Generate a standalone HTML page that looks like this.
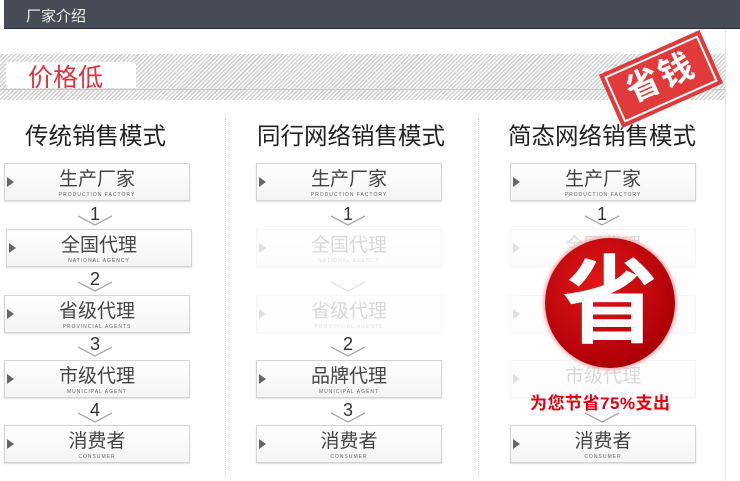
<!DOCTYPE html>
<html><head><meta charset="utf-8"><style>
*{margin:0;padding:0;box-sizing:border-box}
body{width:740px;height:481px;background:#fff;position:relative;overflow:hidden;font-family:"Liberation Sans","Noto Sans CJK SC",sans-serif}
.hdr{position:absolute;left:4px;top:0;width:736px;height:29px;background:#464b55;border-bottom:1px solid #2e323a}
.hdr span{position:absolute;left:22px;top:5px;color:#f2f2f2;font-size:15px}
.hatch{position:absolute;left:0;top:54px;width:725px;height:46px;background:repeating-linear-gradient(135deg,#fff 0 1.5px,#cfcfcf 1.5px 3px)}
.line{position:absolute;left:0;top:89px;width:725px;height:1px;background:#c8c8c8}
.tag{position:absolute;left:6px;top:62px;width:130px;height:26px;background:#fff}
.tag span{position:absolute;left:22px;top:-4px;color:#e5303c;font-size:25px}
.vr{position:absolute;left:725px;top:30px;width:1px;height:451px;background:#e6e6e6}
.dv{position:absolute;top:118px;height:358px;border-left:1px dotted #c8c8c8}
.ttl{position:absolute;top:117px;font-size:23.5px;color:#222}
.box{position:absolute;width:186px;height:38px;border:1px solid #d4d4d4;background:linear-gradient(#fff,#f4f4f4);box-shadow:0 1px 1px #ddd}
.box:before{content:"";position:absolute;left:2px;top:13px;border-left:7px solid #666;border-top:5px solid transparent;border-bottom:5px solid transparent}
.box b{position:absolute;left:0;right:0;top:6px;text-align:center;font-weight:normal;font-size:19px;color:#444;line-height:20px}
.box i{position:absolute;left:0;right:0;top:28px;text-align:center;font-style:normal;font-size:5px;letter-spacing:1px;color:#666}
.f{opacity:.2}
.n{position:absolute;width:40px;text-align:center;font-size:18px;color:#333;line-height:18px}
</style></head><body>
<div class="hdr"><span>厂家介绍</span></div>
<div class="hatch"></div><div class="line"></div>
<div class="tag"><span>价格低</span></div>
<div class="vr"></div>
<div class="dv" style="left:225px"></div><div class="dv" style="left:478px"></div>
<div class="ttl" style="left:25px">传统销售模式</div>
<div class="ttl" style="left:257px">同行网络销售模式</div>
<div class="ttl" style="left:508px">简态网络销售模式</div>

<div class="box" style="left:4px;top:163px"><b>生产厂家</b><i>PRODUCTION FACTORY</i></div>
<div class="box" style="left:6px;top:229px"><b>全国代理</b><i>NATIONAL AGENCY</i></div>
<div class="box" style="left:4px;top:295px"><b>省级代理</b><i>PROVINCIAL AGENTS</i></div>
<div class="box" style="left:4px;top:360px"><b>市级代理</b><i>MUNICIPAL AGENT</i></div>
<div class="box" style="left:4px;top:425px"><b>消费者</b><i>CONSUMER</i></div>
<div class="box" style="left:256px;top:163px"><b>生产厂家</b><i>PRODUCTION FACTORY</i></div>
<div class="box f" style="left:256px;top:229px"><b>全国代理</b><i>NATIONAL AGENCY</i></div>
<div class="box f" style="left:256px;top:295px"><b>省级代理</b><i>PROVINCIAL AGENTS</i></div>
<div class="box" style="left:256px;top:360px"><b>品牌代理</b><i>MUNICIPAL AGENT</i></div>
<div class="box" style="left:256px;top:425px"><b>消费者</b><i>CONSUMER</i></div>
<div class="box" style="left:510px;top:163px"><b>生产厂家</b><i>PRODUCTION FACTORY</i></div>
<div class="box f" style="left:510px;top:229px"><b>全国代理</b><i>NATIONAL AGENCY</i></div>
<div class="box f" style="left:510px;top:295px"><b>省级代理</b></div>
<div class="box f" style="left:510px;top:360px"><b>市级代理</b></div>
<div class="box" style="left:510px;top:425px"><b>消费者</b><i>CONSUMER</i></div>

<div class="n" style="left:75px;top:205px">1</div>
<div class="n" style="left:75px;top:270px">2</div>
<div class="n" style="left:75px;top:335px">3</div>
<div class="n" style="left:75px;top:401px">4</div>
<div class="n" style="left:328px;top:205px">1</div>
<div class="n" style="left:328px;top:335px">2</div>
<div class="n" style="left:328px;top:401px">3</div>
<div class="n" style="left:582px;top:205px">1</div>
<svg style="position:absolute;left:0;top:0" width="740" height="481" fill="none" stroke="#aaa" stroke-width="1.3">
<path d="M78 216l17 9 17-9M78 282l17 9 17-9M78 347l17 9 17-9M78 413l17 9 17-9"/>
<path d="M331 216l17 9 17-9M331 347l17 9 17-9M331 413l17 9 17-9"/>
<path d="M331 282l17 9 17-9" stroke="#e2e2e2"/>
<path d="M585 216l17 9 17-9M585 413l17 9 17-9"/>
</svg>

<div style="position:absolute;left:606px;top:50px;width:110px;height:58px;background:#e03a3a;transform:rotate(-24deg);border:3px solid #e03a3a;outline:2px solid #fff;outline-offset:-6px;color:#fff;font-weight:bold;font-size:34px;line-height:50px;text-align:center;letter-spacing:2px">省钱</div>

<div style="position:absolute;left:545px;top:238px;width:130px;height:130px;border-radius:50%;background:radial-gradient(circle at 40% 35%,#e01818,#b00008 70%,#8a0005);box-shadow:0 0 3px 2px #f2b0b0;color:#fff;font-weight:bold;font-size:96px;line-height:130px;text-align:center">省</div>
<div style="position:absolute;left:530px;top:389px;width:170px;font-weight:bold;font-size:17px;color:#e00010;letter-spacing:0.5px">为您节省75%支出</div>
</body></html>
